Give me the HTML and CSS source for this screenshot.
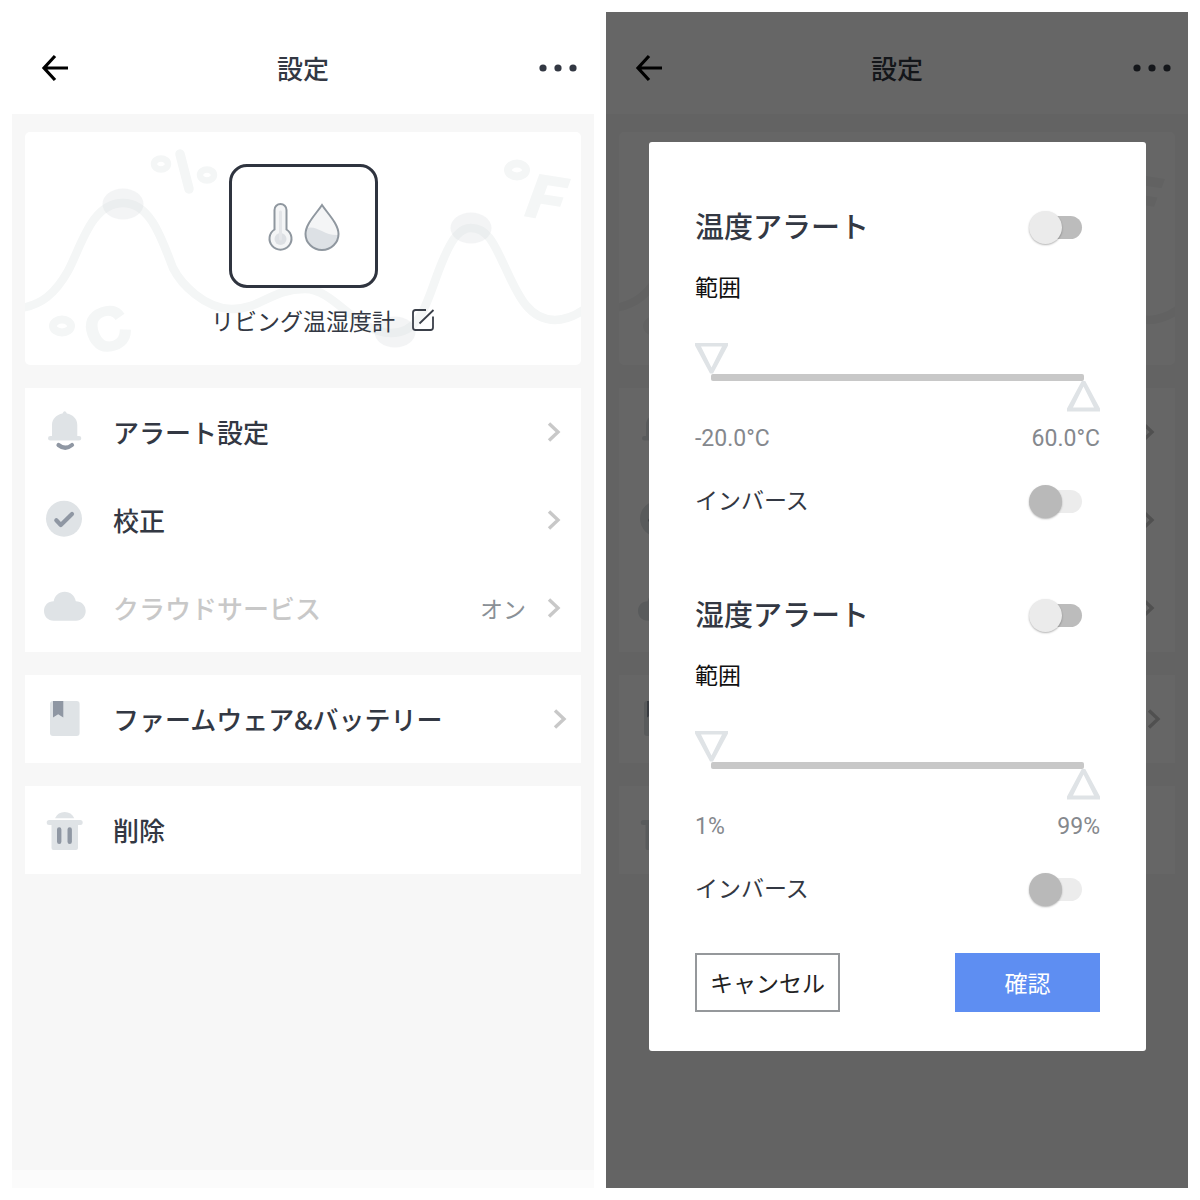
FILE: index.html
```
<!DOCTYPE html>
<html lang="ja">
<head>
  <meta charset="UTF-8" />
  <meta name="viewport" content="width=device-width, initial-scale=1.0" />
  <title>設定</title>
  <link rel="stylesheet" href="styles.css">
</head>
<body>
  <!-- shared icons -->
  <svg class="sprite" aria-hidden="true">
    <symbol id="back" viewBox="0 0 28 28">
      <path d="M14 2 L3 14 L14 26 M3 14 H27" fill="none" stroke="#000" stroke-width="3.2" />
    </symbol>
    <symbol id="more" viewBox="0 0 38 8">
      <g fill="#333843"><circle cx="4" cy="4" r="3.6" /><circle cx="19" cy="4" r="3.6" /><circle cx="34" cy="4" r="3.6" /></g>
    </symbol>
    <symbol id="chevron" viewBox="0 0 14 20">
      <path d="M2 1.5 L11 10 L2 18.5" fill="none" stroke="#c8c8c8" stroke-width="3.4" />
    </symbol>
    <symbol id="bell" viewBox="0 0 44 44">
      <path d="M20.5 3.5 Q22.7 -1 24.9 3.5 C31 4.5 35.3 9 35.3 15 V26 H37 A2.3 2.3 0 0 1 37 30.6 H8.3 A2.3 2.3 0 0 1 8.3 26 H10 V15 C10 9 14.5 4.5 20.5 3.5 Z" fill="#dfe3e6" />
      <path d="M16.5 35 Q23.3 40.5 30 35" fill="none" stroke="#8f97a3" stroke-width="4.2" stroke-linecap="round" />
    </symbol>
    <symbol id="check" viewBox="0 0 44 44">
      <circle cx="22" cy="20.7" r="18" fill="#dfe3e6" />
      <path d="M14.3 22.3 L18.8 27 L30 16" fill="none" stroke="#8f97a3" stroke-width="4.2" stroke-linecap="round" stroke-linejoin="round" />
    </symbol>
    <symbol id="cloud" viewBox="0 0 44 44">
      <path d="M11.7 15.3 C12.5 9.5 17 5.7 22.7 5.7 C28.5 5.7 32.8 9.5 33.8 15.3 C39.5 15.3 43.7 19.5 43.7 25 C43.7 30.5 39.5 34.7 34 34.7 H11.7 C6 34.7 2 30.5 2 25 C2 19.5 6 15.3 11.7 15.3 Z" fill="#dfe3e6" />
    </symbol>
    <symbol id="book" viewBox="0 0 44 44">
      <rect x="8" y="4" width="29.6" height="35" rx="3" fill="#dfe3e6" />
      <path d="M11 4 H21.3 V20.5 L16.2 17.3 L11 20.5 Z" fill="#8f97a3" />
    </symbol>
    <symbol id="trash" viewBox="0 0 44 44">
      <path d="M13 10.3 Q16 4 22.7 4 Q29.3 4 32.3 10.3 Z" fill="#dfe3e6" />
      <path d="M7.2 12 H38.2 A2.5 2.5 0 0 1 38.2 17 H36 V40 Q36 42 34 42 H11.5 Q9.5 42 9.5 40 V17 H7.2 A2.5 2.5 0 0 1 7.2 12 Z" fill="#dfe3e6" />
      <path d="M17.2 21.5 V33.8 M27.7 21.5 V33.8" stroke="#8f97a3" stroke-width="4.4" stroke-linecap="round" />
    </symbol>
    <g id="wave">
      <g fill="none" stroke="#f4f6f6">
        <path stroke-width="8.5" d="M-4 176 C16 173 30 162 43 139 C56 115 66 71 98 71 C126 71 137 108 148 136 C156 152 180 177 207 177 C236 177 246 157 280 157 C310 157 330 200 366 201 C399 201 402 165 418 128 C428 104 436 96 446 96 C463 96 470 114 480 135 C492 161 503 188 530 188 C541 188 550 184 560 177" />
        <path stroke-width="9.5" stroke-linecap="round" d="M155 22 L164 57" />
        <g stroke-width="6.5">
          <ellipse cx="136" cy="32" rx="7" ry="5.5" />
          <ellipse cx="182" cy="43" rx="7" ry="5.5" />
        </g>
        <g stroke-width="8">
          <ellipse cx="37" cy="194" rx="9" ry="6.5" />
          <ellipse cx="492" cy="38" rx="9" ry="6.5" />
        </g>
      </g>
      <g class="wave-dots">
        <ellipse cx="98" cy="72" rx="20.5" ry="15.5" />
        <ellipse cx="370" cy="200" rx="20.5" ry="15.5" />
        <ellipse cx="446" cy="96" rx="20.5" ry="15.5" />
      </g>
    </g>
  </svg>

  <main class="screens">
    <section class="phone">
      <header class="topbar">
        <button class="icon-button" aria-label="戻る"><svg width="28" height="28"><use href="#back" /></svg></button>
        <h1>設定</h1>
        <button class="icon-button" aria-label="メニュー"><svg width="38" height="8"><use href="#more" /></svg></button>
      </header>
      <div class="content">
        <div class="device">
          <svg class="device-wave" viewBox="0 0 556 233" preserveAspectRatio="xMidYMid slice" aria-hidden="true">
            <use href="#wave" />
            <text class="wave-unit" transform="translate(69 224) rotate(-20)">C</text>
            <text class="wave-unit slant" transform="translate(500 83) rotate(9)">F</text>
          </svg>
          <div class="device-box">
            <svg width="76" height="50" viewBox="0 0 76 50" aria-hidden="true">
              <path d="M9.5 28.5 V9 A6 6 0 0 1 21.5 9 V28.5 A11 11 0 1 1 9.5 28.5 Z" fill="#f4f5f6" stroke="#8f979f" stroke-width="2" />
              <circle cx="15.5" cy="38" r="6" fill="#dde0e4" />
              <path d="M15.5 11 V38" stroke="#e4e6e9" stroke-width="3" stroke-linecap="round" />
              <path d="M57 4 C51 13 40.5 23 40.5 33 A16.5 16 0 0 0 73.5 33 C73.5 23 63 13 57 4 Z" fill="#f4f5f6" />
              <path d="M41.5 27 C53 24 59 35 73.5 34 C73.5 42 66 49 57 49 C47 49 38 39 41.5 27 Z" fill="#dde1e5" />
              <path d="M57 4 C51 13 40.5 23 40.5 33 A16.5 16 0 0 0 73.5 33 C73.5 23 63 13 57 4 Z" fill="none" stroke="#8f979f" stroke-width="2" />
            </svg>
          </div>
          <div class="device-name">
            <span>リビング温湿度計</span>
            <button class="icon-button" aria-label="名前を編集">
              <svg width="24" height="24" viewBox="0 0 24 24">
                <path d="M15 2 H4.5 Q2 2 2 4.5 V19.5 Q2 22 4.5 22 H19.5 Q22 22 22 19.5 V8.5 M8.5 15.5 L22.5 2" fill="none" stroke="#3a3f49" stroke-width="1.8" />
              </svg>
            </button>
          </div>
        </div>

        <nav class="group">
          <a class="row" href="#alert">
            <svg class="row-icon"><use href="#bell" /></svg>
            <span class="row-label">アラート設定</span>
            <svg class="chevron"><use href="#chevron" /></svg>
          </a>
          <a class="row" href="#calibration">
            <svg class="row-icon"><use href="#check" /></svg>
            <span class="row-label">校正</span>
            <svg class="chevron"><use href="#chevron" /></svg>
          </a>
          <a class="row muted" href="#cloud-service">
            <svg class="row-icon"><use href="#cloud" /></svg>
            <span class="row-label">クラウドサービス</span>
            <span class="row-value">オン</span>
            <svg class="chevron"><use href="#chevron" /></svg>
          </a>
        </nav>
        <nav class="group">
          <a class="row wide" href="#firmware">
            <svg class="row-icon"><use href="#book" /></svg>
            <span class="row-label">ファームウェア&amp;バッテリー</span>
            <svg class="chevron"><use href="#chevron" /></svg>
          </a>
        </nav>
        <nav class="group">
          <a class="row" href="#delete">
            <svg class="row-icon"><use href="#trash" /></svg>
            <span class="row-label">削除</span>
          </a>
        </nav>
      </div>
      <div class="home-strip"></div>
    </section>

    <section class="phone">
      <header class="topbar">
        <button class="icon-button" aria-label="戻る"><svg width="28" height="28"><use href="#back" /></svg></button>
        <h2>設定</h2>
        <button class="icon-button" aria-label="メニュー"><svg width="38" height="8"><use href="#more" /></svg></button>
      </header>
      <div class="content" aria-hidden="true">
        <div class="device">
          <svg class="device-wave" viewBox="0 0 556 233" preserveAspectRatio="xMidYMid slice">
            <use href="#wave" />
            <text class="wave-unit slant" transform="translate(500 83) rotate(9)">F</text>
          </svg>
        </div>
        <div class="group">
          <div class="row"><svg class="row-icon"><use href="#bell" /></svg><span class="row-label"></span><svg class="chevron"><use href="#chevron" /></svg></div>
          <div class="row"><svg class="row-icon"><use href="#check" /></svg><span class="row-label"></span><svg class="chevron"><use href="#chevron" /></svg></div>
          <div class="row"><svg class="row-icon"><use href="#cloud" /></svg><span class="row-label"></span><svg class="chevron"><use href="#chevron" /></svg></div>
        </div>
        <div class="group">
          <div class="row wide"><svg class="row-icon"><use href="#book" /></svg><span class="row-label"></span><svg class="chevron"><use href="#chevron" /></svg></div>
        </div>
        <div class="group">
          <div class="row"><svg class="row-icon"><use href="#trash" /></svg></div>
        </div>
      </div>
      <div class="home-strip"></div>

      <div class="overlay">
        <form class="dialog" role="dialog" aria-label="アラート設定">
          <section class="alert">
            <div class="alert-line alert-title">
              <label for="tempAlert">温度アラート</label>
              <input class="switch" type="checkbox" id="tempAlert">
            </div>
            <p class="range-label">範囲</p>
            <div class="range">
              <input class="low" type="range" min="-20" max="60" value="-20" aria-label="最低温度">
              <div class="range-track"></div>
              <input class="high" type="range" min="-20" max="60" value="60" aria-label="最高温度">
            </div>
            <div class="range-values"><span>-20.0°C</span><span>60.0°C</span></div>
            <div class="alert-line">
              <label for="tempInverse">インバース</label>
              <input class="switch" type="checkbox" id="tempInverse" disabled>
            </div>
          </section>

          <section class="alert">
            <div class="alert-line alert-title">
              <label for="humAlert">湿度アラート</label>
              <input class="switch" type="checkbox" id="humAlert">
            </div>
            <p class="range-label">範囲</p>
            <div class="range">
              <input class="low" type="range" min="1" max="99" value="1" aria-label="最低湿度">
              <div class="range-track"></div>
              <input class="high" type="range" min="1" max="99" value="99" aria-label="最高湿度">
            </div>
            <div class="range-values"><span>1%</span><span>99%</span></div>
            <div class="alert-line">
              <label for="humInverse">インバース</label>
              <input class="switch" type="checkbox" id="humInverse" disabled>
            </div>
          </section>

          <div class="actions">
            <button class="button cancel" type="button">キャンセル</button>
            <button class="button confirm" type="button">確認</button>
          </div>
        </form>
      </div>
    </section>
  </main>
</body>
</html>
```
FILE: styles.css
```
* {
  box-sizing: border-box;
  margin: 0;
  padding: 0;
}

body {
  background: #fff;
  color: #333843;
  font-family: "Noto Sans CJK JP", sans-serif;
  font-size: 23px;
  line-height: 30px;
}

button,
input {
  font: inherit;
}

svg {
  display: block;
}

.sprite {
  position: absolute;
  width: 0;
  height: 0;
}

.screens {
  display: grid;
  grid-template-columns: 1fr 1fr;
  gap: 12px;
  min-height: 100vh;
  padding: 12px;
}

.phone {
  position: relative;
  display: flex;
  flex-direction: column;
  background: #f7f7f7;
}

.topbar {
  display: grid;
  grid-template-columns: 1fr auto 1fr;
  align-items: center;
  height: 102px;
  padding: 10px 17px 0 29px;
  background: #fff;
}

.topbar h1,
.topbar h2 {
  padding-right: 12px;
  font-size: 26px;
  font-weight: 500;
}

.topbar .icon-button:last-child {
  justify-self: end;
}

.icon-button {
  justify-self: start;
  border: none;
  background: none;
  cursor: pointer;
}

.content {
  flex: 1;
  display: flex;
  flex-direction: column;
  gap: 23px;
  padding: 18px 13px;
}

/* device card */
.device {
  position: relative;
  display: flex;
  flex-direction: column;
  align-items: center;
  gap: 17px;
  height: 233px;
  padding-top: 32px;
  background: #fff;
  border-radius: 5px;
  overflow: hidden;
}

.device-wave {
  position: absolute;
  inset: 0;
  width: 100%;
  height: 100%;
}

.wave-dots {
  fill: rgba(218, 222, 226, 0.33);
}

.wave-unit {
  fill: #f4f6f6;
  stroke: #f4f6f6;
  stroke-width: 3px;
  font-family: "Liberation Sans", sans-serif;
  font-size: 60px;
  font-weight: bold;
}

.wave-unit.slant {
  font-style: italic;
}

.device-box {
  position: relative;
  display: grid;
  place-items: center;
  width: 149px;
  height: 124px;
  border: 3px solid #2f343f;
  border-radius: 18px;
  background: #fff;
}

.device-name {
  position: relative;
  display: grid;
  grid-template-columns: 1fr auto 1fr;
  align-items: center;
  gap: 16px;
  width: 100%;
}

.device-name span {
  grid-column: 2;
}

/* setting rows */
.group {
  background: #fff;
}

.row {
  display: flex;
  align-items: center;
  height: 88px;
  padding: 0 20px 0 17px;
  color: #333843;
  text-decoration: none;
}

.row.wide {
  padding-right: 14px;
}

.row-icon {
  width: 44px;
  height: 44px;
}

.row-label {
  flex: 1;
  padding-left: 27px;
  font-size: 26px;
  font-weight: 500;
}

.muted .row-label {
  color: #c8c8c8;
}

.row-value {
  margin-right: 21px;
  color: #8a9096;
}

.chevron {
  width: 14px;
  height: 20px;
}

.home-strip {
  height: 18px;
  background: #fbfbfb;
}

/* dialog */
.overlay {
  position: absolute;
  inset: 0;
  display: flex;
  align-items: center;
  padding: 0 42px 8px 43px;
  background: rgba(0, 0, 0, 0.6);
}

.dialog {
  flex: 1;
  padding: 64px 46px 39px;
  background: #fff;
  border-radius: 3px;
}

.alert {
  font-family: Roboto, "Noto Sans CJK JP", sans-serif;
}

.alert + .alert {
  margin-top: 75px;
}

.alert-line {
  display: flex;
  align-items: center;
  justify-content: space-between;
  height: 34px;
  padding-right: 18px;
}

.alert-title {
  height: 44px;
  font-size: 29px;
  font-weight: 500;
}

.range-label {
  margin: 24px 0 39px;
  color: #111;
}

.range-track {
  height: 7px;
  margin: 0 16px;
  background: #c8c8c8;
  border-radius: 2px;
}

.range input {
  appearance: none;
  display: block;
  width: 100%;
  height: 31px;
  background: none;
}

.range input::-webkit-slider-thumb {
  appearance: none;
  width: 33px;
  height: 31px;
  background: #dfe3e6;
}

.range .low::-webkit-slider-thumb {
  clip-path: polygon(evenodd, 0 0, 33px 0, 33px 3px, 18px 31px, 15px 31px, 0 3px, 0 0, 6px 4px, 27px 4px, 50% 25px, 6px 4px, 0 0);
}

.range .high::-webkit-slider-thumb {
  clip-path: polygon(evenodd, 0 31px, 33px 31px, 33px 28px, 18px 0, 15px 0, 0 28px, 0 31px, 6px 27px, 27px 27px, 50% 6px, 6px 27px, 0 31px);
}

.range-values {
  display: flex;
  justify-content: space-between;
  margin: 12px 0 31px;
  color: #85888d;
}

.switch {
  appearance: none;
  display: grid;
  align-items: center;
  width: 53px;
  height: 34px;
  cursor: pointer;
}

.switch::before,
.switch::after {
  content: "";
  grid-area: 1 / 1;
}

.switch::before {
  height: 23px;
  margin-left: 8px;
  border-radius: 12px;
  background: #bcbcbc;
}

.switch::after {
  width: 33px;
  height: 33px;
  border-radius: 50%;
  background: #ebebeb;
  box-shadow: 0 1px 2px rgba(0, 0, 0, 0.3);
}

.switch:disabled::before {
  background: #ececec;
}

.switch:disabled::after {
  background: #b9b9b9;
}

.actions {
  display: flex;
  justify-content: space-between;
  margin-top: 46px;
}

.button {
  width: 145px;
  height: 59px;
  border: none;
  cursor: pointer;
}

.cancel {
  border: 2px solid #95989b;
  background: #fff;
  color: #222;
}

.confirm {
  background: #5e8ef2;
  color: #fff;
}
```
